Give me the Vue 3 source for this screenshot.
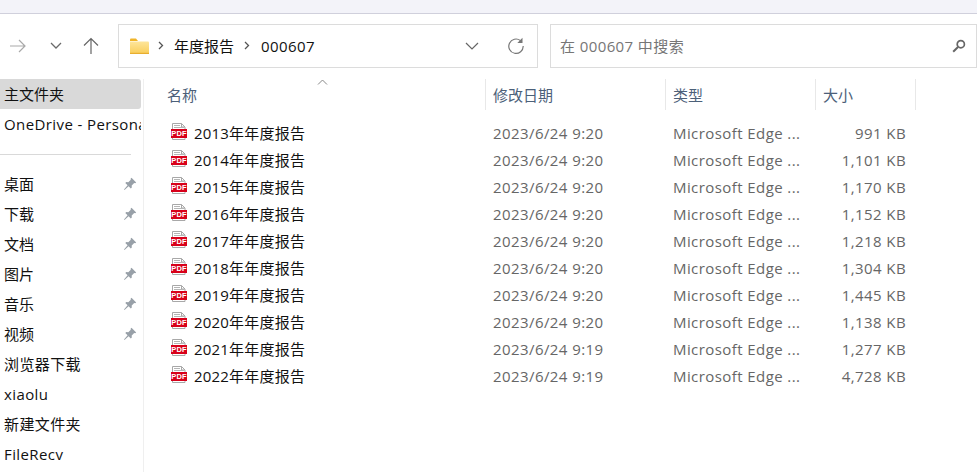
<script setup>
const pinned = ['桌面', '下载', '文档', '图片', '音乐', '视频']
const others = ['浏览器下载', 'xiaolu', '新建文件夹', 'FileRecv']
const files = [
  ['2013', '9:20', '991 KB'],
  ['2014', '9:20', '1,101 KB'],
  ['2015', '9:20', '1,170 KB'],
  ['2016', '9:20', '1,152 KB'],
  ['2017', '9:20', '1,218 KB'],
  ['2018', '9:20', '1,304 KB'],
  ['2019', '9:20', '1,445 KB'],
  ['2020', '9:20', '1,138 KB'],
  ['2021', '9:19', '1,277 KB'],
  ['2022', '9:19', '4,728 KB'],
]
</script>

<template>
  <div class="win">
    <div class="strip"></div>
    <div class="nav">
      <svg class="ic fwd" width="18" height="16" viewBox="0 0 18 16"><path d="M1 8h15M10 2l6 6-6 6" fill="none" stroke="#a9a9a9" stroke-width="1.2"/></svg>
      <svg class="ic down" width="12" height="8" viewBox="0 0 12 8"><path d="M1 1l5 5 5-5" fill="none" stroke="#6a6a6a" stroke-width="1.3"/></svg>
      <svg class="ic up" width="16" height="18" viewBox="0 0 16 18"><path d="M8 17V2M1 8.500l7-7 7 7" fill="none" stroke="#666" stroke-width="1.2"/></svg>
      <div class="addr">
        <svg class="folder" width="19" height="16" viewBox="0 0 19 16">
          <defs>
            <linearGradient id="fg" x1="0" y1="0" x2="0" y2="1">
              <stop offset="0" stop-color="#fee59a"/>
              <stop offset="1" stop-color="#f9cd58"/>
            </linearGradient>
          </defs>
          <path d="M0 1.500Q0 .5 1 .5h5l2 2.500h-8z" fill="#f0b429"/>
          <path d="M0 3.500h18Q19 3.500 19 4.500V15Q19 16 18 16H1Q0 16 0 15z" fill="url(#fg)"/>
          <rect x="0" y="14.800" width="19" height="1.200" fill="#e8ae2f"/>
        </svg>
        <svg class="sep first" width="6" height="9" viewBox="0 0 6 9"><path d="M1 1l3.500 3.500L1 8" fill="none" stroke="#555" stroke-width="1.300"/></svg>
        <span class="crumb">年度报告</span>
        <svg class="sep" width="6" height="9" viewBox="0 0 6 9"><path d="M1 1l3.500 3.500L1 8" fill="none" stroke="#555" stroke-width="1.300"/></svg>
        <span class="crumb latin last">000607</span>
        <span class="grow"></span>
        <svg class="addr-down" width="14" height="8" viewBox="0 0 14 8"><path d="M1 1l6 6 6-6" fill="none" stroke="#666" stroke-width="1.200"/></svg>
        <svg class="refresh" width="18" height="18" viewBox="0 0 18 18"><path d="M13.500 3.600A7.200 7.200 0 1 0 16.200 9" fill="none" stroke="#777" stroke-width="1.200"/><path d="M15.500 .8V6H10.300z" fill="#777"/></svg>
      </div>
      <div class="search">
        <span class="latin">在 000607 中搜索</span>
        <svg width="14" height="14" viewBox="0 0 14 14"><circle cx="8.800" cy="5.200" r="3.600" fill="none" stroke="#666" stroke-width="1.700"/><path d="M6 8L1.200 12.800" stroke="#666" stroke-width="2"/></svg>
      </div>
    </div>
    <div class="body">
      <aside class="side">
        <div class="item active">主文件夹</div>
        <div class="item clip latin">OneDrive - Personal</div>
        <div class="divider"><i></i></div>
        <div class="item" v-for="p in pinned" :key="p">
          <span>{{ p }}</span>
          <svg width="14" height="14" viewBox="0 0 14 14"><path d="M8.500 .8l4.700 4.700-1 .8-1-.2-2.500 2.500.1 2-1 1-2.200-2.300L1.500 13 1 12.500l3.600-4.200-2.300-2.200 1-1 2 .1L7.800 2.700l-.2-1z" fill="#98a0a8"/></svg>
        </div>
        <div class="item latin" v-for="o in others" :key="o">{{ o }}</div>
      </aside>
      <main class="main">
        <svg class="sort" width="11" height="6" viewBox="0 0 11 6"><path d="M1 5.500l4.500-4.500 4.500 4.500" fill="none" stroke="#888" stroke-width="1"/></svg>
        <div class="head">
          <div class="hc name">名称</div>
          <div class="hc">修改日期</div>
          <div class="hc">类型</div>
          <div class="hc">大小</div>
        </div>
        <div class="rows">
          <div class="row" v-for="f in files" :key="f[0]">
            <div class="fname">
              <svg class="pdf" width="16" height="17" viewBox="0 0 16 17">
                <path d="M1.500 .5h9l3.500 3.500v12.500h-12.500z" fill="#fff" stroke="#a8a8a8"/>
                <path d="M10.500 .5v3.500h3.500" fill="none" stroke="#a8a8a8"/>
                <path d="M3 2.500h6M3 4.500h10" stroke="#b5b5b5"/>
                <rect x="0" y="6" width="16" height="9" fill="#d8001a"/>
                <text x="8" y="13.300" class="pdf-label" text-anchor="middle">PDF</text>
              </svg>
              <span>{{ f[0] }}年年度报告</span>
            </div>
            <div class="cell">2023/6/24 {{ f[1] }}</div>
            <div class="cell">Microsoft Edge ...</div>
            <div class="cell size">{{ f[2] }}</div>
          </div>
        </div>
      </main>
    </div>
  </div>
</template>

<style scoped>
.win {
  width: 977px;
  height: 472px;
  overflow: hidden;
  background: #fff;
  color: #111;
  font: 15px/20px "Open Sans", "Noto Sans CJK SC", sans-serif;
}
.latin { letter-spacing: .4px; }
.strip {
  height: 13px;
  background: #f3f3f9;
  border-bottom: 1px solid #d0d0dc;
}
.nav {
  height: 43px;
  margin-top: 10px;
  display: flex;
  align-items: center;
}
.ic { flex: none; }
.fwd { margin-left: 9px; }
.down { margin-left: 23px; }
.up { margin-left: 21px; }
.addr {
  box-sizing: border-box;
  width: 420px;
  height: 44px;
  margin-left: 19px;
  border: 1px solid #dcdcdc;
  display: flex;
  align-items: center;
  padding-left: 11px;
}
.first { margin-left: 9px; }
.crumb { margin-left: 10px; margin-right: 10px; }
.last { margin-left: 11px; }
.sep { flex: none; }
.grow { flex: 1; }
.addr-down { margin-right: 28px; }
.refresh { margin-right: 12px; }
.search {
  box-sizing: border-box;
  width: 427px;
  height: 44px;
  margin-left: 12px;
  border: 1px solid #dcdcdc;
  display: flex;
  align-items: center;
  justify-content: space-between;
  padding: 0 10px 0 9px;
  color: #767676;
}
.body {
  display: flex;
  margin-top: 12px;
  height: 393px;
}
.side {
  box-sizing: border-box;
  width: 144px;
  flex: none;
  border-right: 1px solid #efefef;
  padding-right: 2px;
}
.item {
  box-sizing: border-box;
  height: 30px;
  display: flex;
  align-items: center;
  justify-content: space-between;
  padding: 0 4px 0 4px;
  white-space: nowrap;
}
.item svg { flex: none; }
.active {
  background: #d9d9d9;
  border-radius: 0 3px 3px 0;
}
.clip { overflow: hidden; padding-right: 0; justify-content: flex-start; }
.divider {
  height: 30px;
  display: flex;
  align-items: center;
}
.divider i {
  display: block;
  width: 131px;
  height: 1px;
  background: #d9d9d9;
}
.main {
  flex: 1;
  position: relative;
}
.sort {
  position: absolute;
  left: 173px;
  top: 0;
}
.head {
  display: grid;
  grid-template-columns: 342px 180px 150px 100px;
  height: 31px;
}
.hc {
  border-right: 1px solid #e8e8e8;
  padding-left: 7px;
  display: flex;
  align-items: center;
  color: #4c6079;
}
.hc.name { padding-left: 23px; }
.rows { margin-top: 9px; }
.row {
  display: grid;
  grid-template-columns: 342px 180px 150px 90px;
  height: 27px;
  align-items: center;
}
.fname {
  display: flex;
  align-items: center;
  padding-left: 27px;
  color: #111;
}
.fname span { letter-spacing: .2px; }
.pdf { flex: none; margin-right: 7px; margin-top: -2px; }
.pdf-label {
  font: 700 7.500px "Liberation Sans", sans-serif;
  fill: #fff;
  letter-spacing: .2px;
}
.cell {
  padding-left: 7px;
  color: #666;
  white-space: nowrap;
  letter-spacing: .42px;
}
.size { text-align: right; padding-left: 0; }
</style>

<style>
html, body { margin: 0; background: #fff; overflow: hidden; }
</style>
